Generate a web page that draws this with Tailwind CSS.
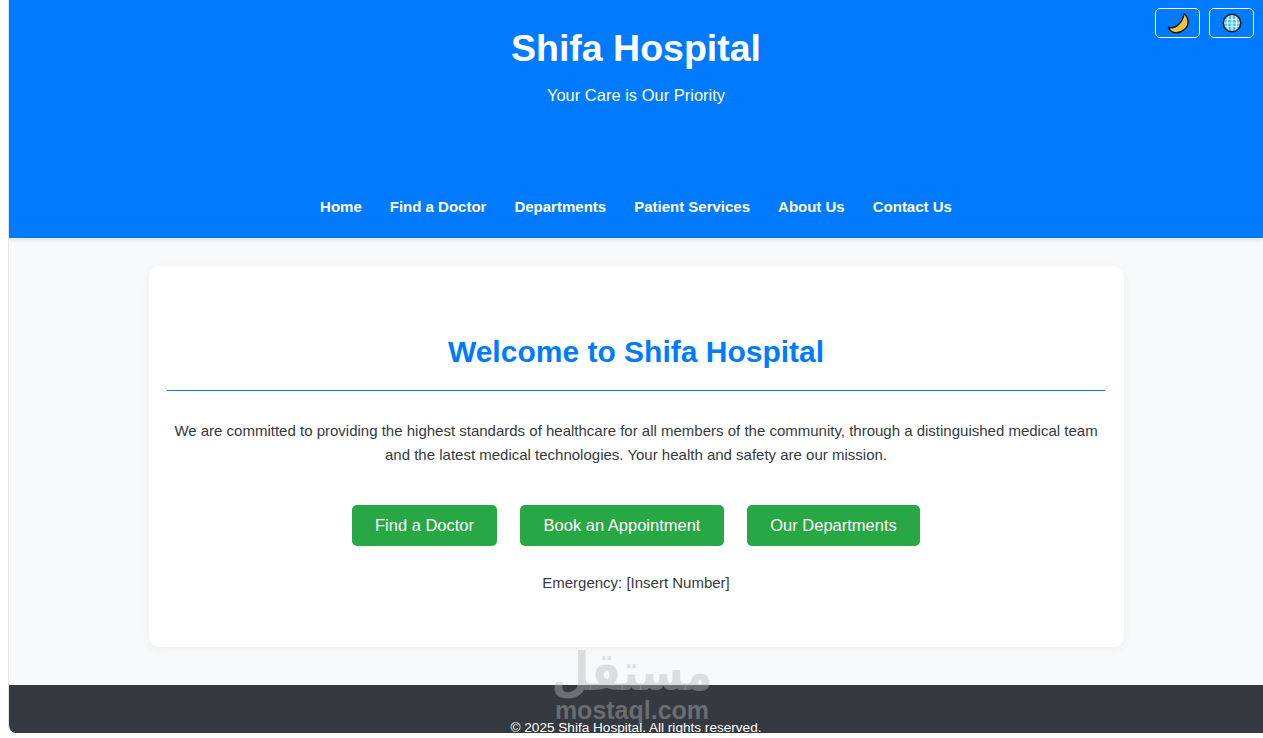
<!DOCTYPE html>
<html lang="en">
<head>
  <meta charset="UTF-8" />
  <title>Shifa Hospital</title>
  <script src="https://cdn.jsdelivr.net/npm/@tailwindcss/browser@4"></script>
</head>
<body class="bg-white font-['Liberation_Sans',Arial,sans-serif] text-[#343a40] overflow-hidden">
  <div class="relative ml-2 h-[733px] flex flex-col border-l border-neutral-200 rounded-bl-lg bg-[#f8f9fa] overflow-hidden">

    <!-- header -->
    <header class="relative h-[238px] shrink-0 bg-[#007bff] text-white text-center shadow-[0_2px_5px_rgba(0,0,0,0.1)]">
      <div class="absolute top-2 right-[9px] flex gap-[9px]">
        <button class="w-[45px] h-[30px] flex items-center justify-center rounded-[5px] border border-white">
          <svg width="22" height="22" viewBox="0 0 22 22">
            <path d="M17 1.500C20.500 4 22 9 20.500 13.500C18.500 18.500 12 21.500 7 20.500C4.500 20 2.500 18 1.500 15.500C5 16 8.500 15.500 11 13C14.500 10 16.500 6 17 1.500Z" fill="#edc24a" stroke="#1c1c1c" stroke-width="1.500" stroke-linejoin="round"/>
          </svg>
        </button>
        <button class="w-[45px] h-[30px] flex items-center justify-center rounded-[5px] border border-white">
          <svg width="20" height="20" viewBox="0 0 20 20">
            <circle cx="10" cy="10" r="8.800" fill="#4cc4ee"/>
            <path d="M2 6.500H18M1.500 10H18.500M2 13.500H18M10 1.500V18.500M6.500 2.500C5 7 5 13 6.500 17.500M13.500 2.500C15 7 15 13 13.500 17.500" fill="none" stroke="#e6f8fe" stroke-width="1.200"/>
            <circle cx="10" cy="10" r="8.800" fill="none" stroke="#1c1c1c" stroke-width="1.500"/>
          </svg>
        </button>
      </div>
      <h1 class="pt-[26px] text-[37.5px] leading-[44px] font-bold">Shifa Hospital</h1>
      <p class="mt-[13px] text-[16.5px] leading-[24px]">Your Care is Our Priority</p>
      <nav class="mt-[88px] flex justify-center gap-[28px] text-[15px] leading-[24px] font-bold">
        <a href="#">Home</a>
        <a href="#">Find a Doctor</a>
        <a href="#">Departments</a>
        <a href="#">Patient Services</a>
        <a href="#">About Us</a>
        <a href="#">Contact Us</a>
      </nav>
    </header>

    <!-- welcome card -->
    <main class="flex-1 pt-7">
      <section class="mx-auto w-[975px] h-[381px] px-[18px] pt-[67px] bg-white rounded-[10px] shadow-[0_2px_10px_rgba(0,0,0,0.05)] text-center">
        <h2 class="text-[30px] leading-[38px] font-bold text-[#007bff]">Welcome to Shifa Hospital</h2>
        <div class="mt-[19px] mr-px h-px bg-[#007bff]"></div>
        <p class="mt-[28px] text-[15px] leading-[24px]">We are committed to providing the highest standards of healthcare for all members of the community, through a distinguished medical team<br>and the latest medical technologies. Your health and safety are our mission.</p>
        <div class="mt-[38px] flex justify-center gap-[23px]">
          <a href="#" class="h-[41px] w-[145px] flex items-center justify-center rounded-[5px] bg-[#28a745] text-white text-[16.5px]">Find a Doctor</a>
          <a href="#" class="h-[41px] w-[204px] flex items-center justify-center rounded-[5px] bg-[#28a745] text-white text-[16.5px]">Book an Appointment</a>
          <a href="#" class="h-[41px] w-[173px] flex items-center justify-center rounded-[5px] bg-[#28a745] text-white text-[16.5px]">Our Departments</a>
        </div>
        <p class="mt-[25px] text-[15px] leading-[24px]">Emergency: [Insert Number]</p>
      </section>
    </main>

    <!-- footer -->
    <footer class="h-[48px] shrink-0 bg-[#343a40] text-white text-center text-[13.6px] leading-[17px] pt-[34px]">
      <p class="relative z-10">&copy; 2025 Shifa Hospital. All rights reserved.</p>
    </footer>

    <!-- watermark -->
    <div class="absolute z-[5] left-[545px] top-[643px] w-[156px] flex flex-col items-center text-[#b7b7b7]/[0.42] font-bold pointer-events-none">
      <span class="font-['DejaVu_Sans',sans-serif] text-[44px] leading-[54px] scale-y-[1.2] translate-y-[2px]" dir="rtl" lang="ar">مستقل</span>
      <span class="text-[25px] leading-[26px]">mostaql.com</span>
    </div>
  </div>
</body>
</html>
